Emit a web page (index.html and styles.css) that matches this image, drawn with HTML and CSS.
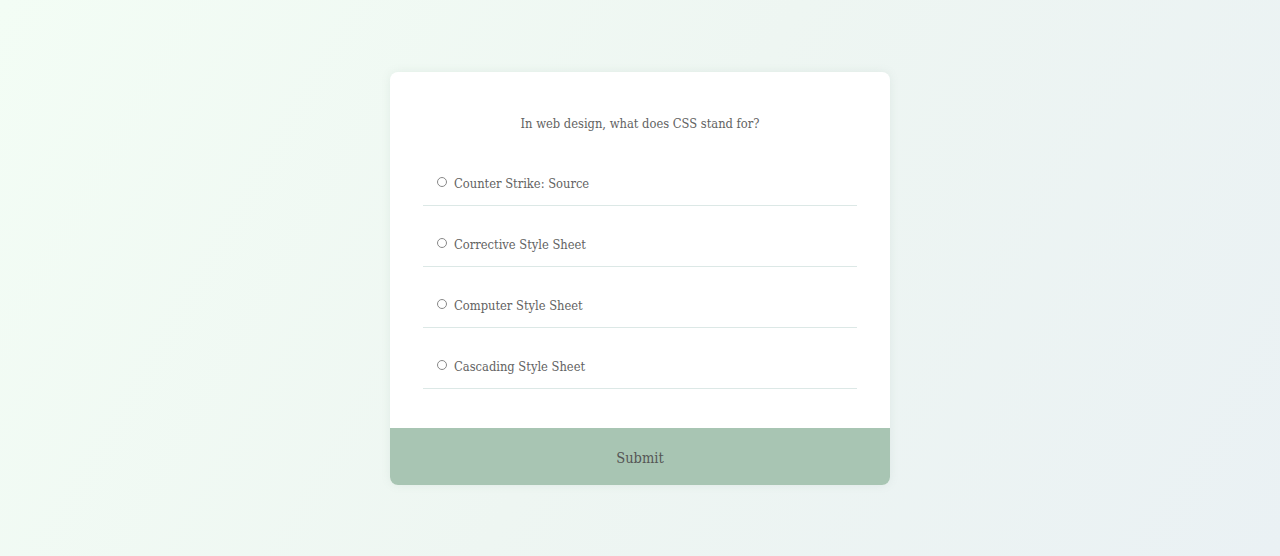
FILE: index.html
```html
<!DOCTYPE html>
<html>
<head>
<meta charset="utf-8">
<link rel="stylesheet" href="styles.css">
</head>
<body>
<div class="page">
  <form class="card">
    <div class="body">
      <p class="question">In web design, what does CSS stand for?</p>
      <ul class="options">
        <li class="option"><span class="radio"></span><span class="label">Counter Strike: Source</span></li>
        <li class="option"><span class="radio"></span><span class="label">Corrective Style Sheet</span></li>
        <li class="option"><span class="radio"></span><span class="label">Computer Style Sheet</span></li>
        <li class="option"><span class="radio"></span><span class="label">Cascading Style Sheet</span></li>
      </ul>
    </div>
    <button type="button" class="submit">Submit</button>
  </form>
</div>
</body>
</html>
```
FILE: styles.css
```css
html, body {
  margin: 0;
  height: 100%;
}
body {
  background: linear-gradient(120deg, #f3fdf5 0%, #eef6f2 50%, #eaf1f4 100%);
  font-family: "DejaVu Serif", "Liberation Serif", serif;
  font-stretch: condensed;
  color: #666;
}
.page {
  display: flex;
  justify-content: center;
  padding-top: 72px;
}
.card {
  width: 500px;
  background: #fff;
  border-radius: 8px;
  box-shadow: 0 0 10px rgba(120, 150, 140, 0.12);
  overflow: hidden;
  margin: 0;
}
.body {
  padding: 42px 33px 39px;
}
.question {
  margin: 0 0 11px;
  text-align: center;
  font-size: 12.8px;
  line-height: 20px;
  color: #626262;
}
.options {
  list-style: none;
  margin: 0;
  padding: 0;
}
.option {
  display: flex;
  align-items: center;
  gap: 7px;
  height: 60px;
  padding: 0 0 0 14px;
  border-bottom: 1px solid #dce8e6;
}
.option .radio {
  flex: none;
  width: 8px;
  height: 8px;
  border: 1px solid #888;
  border-radius: 50%;
  margin-top: 16px;
  position: relative;
  top: -1px;
}
.option .label {
  font-size: 12.8px;
  line-height: 20px;
  margin-top: 18px;
  color: #626262;
}
.submit {
  display: block;
  width: 100%;
  height: 57px;
  border: 0;
  margin: 0;
  padding: 3px 0 0;
  background: #a8c5b3;
  font-family: "DejaVu Serif", "Liberation Serif", serif;
  font-stretch: condensed;
  font-size: 14.5px;
  color: #555;
  cursor: pointer;
}
```
